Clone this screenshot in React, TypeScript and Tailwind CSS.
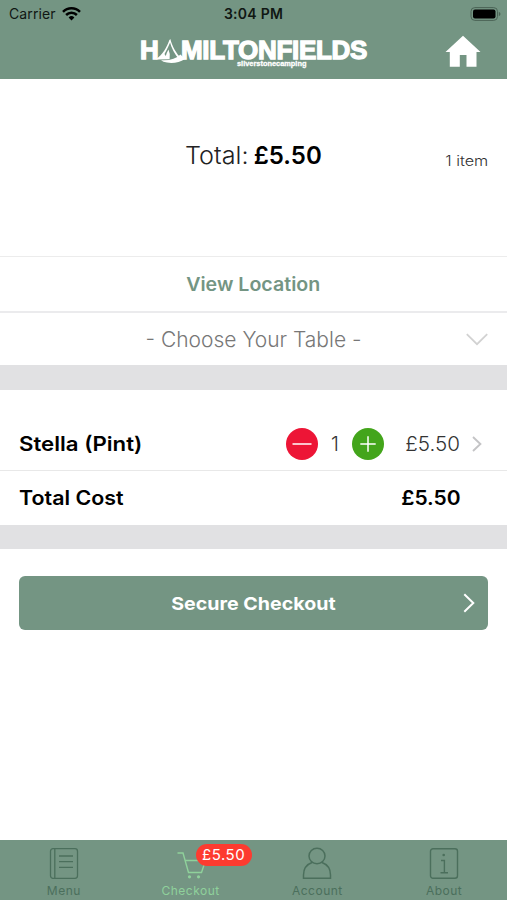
import React from 'react';

const ios = "font-['Inter',sans-serif]";

function StatusBar() {
  return (
    <div className="grid h-[27px] grid-cols-3 items-center text-[14px] text-[#101713]">
      <div className="flex items-center gap-[6px] pl-[9px]">
        <span className="tracking-[0.1px]">Carrier</span>
        <svg width="19" height="14" viewBox="0 0 19 14" fill="none" stroke="black" strokeWidth="2.5">
          <path d="M1 4.8a12 12 0 0 1 17 0" />
          <path d="M4.1 8a7.6 7.6 0 0 1 10.8 0" />
          <path d="M9.5 13.4 6.6 10.5a4.1 4.1 0 0 1 5.8 0Z" fill="black" stroke="none" />
        </svg>
      </div>
      <div className="text-center font-semibold whitespace-nowrap tracking-[0.25px]">3:04 PM</div>
      <div className="flex justify-end pr-[6px]">
        <svg width="31" height="14" viewBox="0 0 31 14">
          <rect x="1" y="0.6" width="26.5" height="12.8" rx="3.8" fill="none" stroke="#4b6356" />
          <rect x="3" y="2.6" width="22.5" height="8.8" rx="2" fill="black" />
          <path d="M28.8 4.8v4.4q1.7-.7 1.7-2.2t-1.7-2.2Z" fill="#4b6356" />
        </svg>
      </div>
    </div>
  );
}

function Logo() {
  return (
    <div className="relative flex h-[32px] w-[230px] items-start font-['Liberation_Sans',sans-serif] text-white">
      <span className="mt-[2px] w-[19px] text-[26px] leading-[20px] font-bold [-webkit-text-stroke:1.3px_white]">H</span>
      <svg className="-ml-[3px] shrink-0" width="30" height="26" viewBox="0 0 30 26" fill="white">
        <path d="M14.2 1 13.2 2.6C10.5 10 7 16.2 0 21.2L6.5 20.8C6 20 10.5 13 14.2 4.2Z" />
        <path d="M14.2 1C16.5 8.5 20 15.5 25.5 20.5L23.5 21.5C18.5 16.5 15.5 10 13.6 3Z" />
        <path d="M12.5 11.5Q10.5 15 9.8 18L8 15.5Q6 19 1 21.5L13.6 21.2Q14.6 16 12.5 11.5Z" />
        <path d="M5 22.2Q18 23 24.5 16.5L29 21Q21 26 11 24.6Q7 24 5 22.2Z" />
      </svg>
      <span className="mt-[2px] -ml-[5px] text-[26px] leading-[20px] font-bold tracking-[-0.3px] whitespace-nowrap [-webkit-text-stroke:1.3px_white]">MILTONFIELDS</span>
      <span className="absolute top-[22px] left-[97px] text-[7.4px] leading-[8px] font-bold whitespace-nowrap [-webkit-text-stroke:0.3px_white]">silverstonecamping</span>
    </div>
  );
}

function Tab({ label, active = false, children }: { label: string; active?: boolean; children: React.ReactNode }) {
  return (
    <div className={`flex flex-1 flex-col items-center pt-[7px] pl-px ${active ? 'text-[#8fd19b]' : 'text-[#4b6f5c]'}`}>
      <div className="relative h-[34px] w-[30px]">{children}</div>
      <span className="mt-[2px] text-[12px] leading-[15px] tracking-[0.5px]">{label}</span>
    </div>
  );
}

export default function App() {
  return (
    <div className={`flex h-[900px] w-[507px] flex-col overflow-hidden bg-white text-black ${ios}`}>
      <header className="h-[79px] shrink-0 bg-[#749583]">
        <StatusBar />
        <div className="flex items-start pl-[140px]">
          <div className="pt-[11px]"><Logo /></div>
          <svg className="mt-[8px] ml-[75px]" width="36" height="33" viewBox="0 0 36 33" fill="white">
            <path d="M18 .8 35.5 17H31.5V31.8H21.5V20H14.8V31.8H4.8V17H.5Z" />
          </svg>
        </div>
      </header>

      <section className="grid h-[177px] shrink-0 grid-cols-[1fr_auto_1fr] items-start px-[19px]">
        <span />
        <div className="flex pt-[61px] text-[24px] leading-[32px] font-light whitespace-nowrap">
          <span className="mr-[8px] origin-left scale-x-105 text-[#222]">Total:</span>
          <span className="origin-right font-semibold">£5.50</span>
        </div>
        <div className="origin-right scale-x-112 pt-[72px] text-right text-[14.5px] leading-[20px] font-light text-[#333]">1 item</div>
      </section>

      <div className="flex h-[55px] shrink-0 items-center justify-center border-t border-[#ececec] pt-[2px] text-[18.5px] font-semibold text-[#749583]">
        <span className="scale-x-106">View Location</span>
      </div>
      <div className="grid h-[54px] shrink-0 grid-cols-[1fr_auto_1fr] items-center border-t-2 border-[#ebebed] px-[19px] pt-px">
        <span />
        <span className="text-[21px] leading-[30px] font-light text-[#777]">- Choose Your Table -</span>
        <svg className="-mt-px justify-self-end" width="22" height="13" viewBox="0 0 22 13" fill="none" stroke="#d2d2d2" strokeWidth="1.8"><path d="m.8 1.2 10.2 10 10.2-10" /></svg>
      </div>
      <div className="h-[25px] shrink-0 bg-[#e1e1e3]" />

      <div className="flex h-[80px] shrink-0 items-center pt-[28px] pl-[19px]">
        <div className="flex w-[267px] text-[20px] font-semibold"><span className="origin-left scale-x-111">Stella (Pint)</span></div>
        <svg width="32" height="32" viewBox="0 0 32 32"><circle cx="16" cy="16" r="16" fill="#ed1536" /><path d="M6.5 16h19" stroke="white" strokeWidth="1.5" /></svg>
        <span className="w-[34px] text-center text-[20px] font-light text-[#333]">1</span>
        <svg width="32" height="32" viewBox="0 0 32 32"><circle cx="16" cy="16" r="16" fill="#43a51b" /><path d="M8.3 16h15.4M16 8.3v15.4" stroke="white" strokeWidth="1.5" /></svg>
        <span className="w-[76px] origin-right scale-x-103 text-right text-[20px] font-light text-[#333]">£5.50</span>
        <svg className="ml-[12px]" width="10" height="16" viewBox="0 0 10 16" fill="none" stroke="#c4c4c6" strokeWidth="1.9"><path d="m1 1 7.4 7L1 15" /></svg>
      </div>
      <div className="flex h-[55px] shrink-0 items-center justify-between border-t border-[#e8e8e8] pr-[46px] pl-[19px] text-[20px] font-semibold">
        <span className="origin-left scale-x-107">Total Cost</span><span className="origin-right scale-x-105">£5.50</span>
      </div>
      <div className="h-[24px] shrink-0 bg-[#e1e1e3]" />

      <main className="flex-1 px-[19px] pt-[27px]">
        <button className="grid h-[54px] w-full grid-cols-[1fr_auto_1fr] items-center rounded-[6px] bg-[#749583] pr-[13px] pl-[13px] text-white">
          <span />
          <span className="scale-x-109 text-[18px] font-bold">Secure Checkout</span>
          <svg className="justify-self-end" width="12" height="20" viewBox="0 0 12 20" fill="none" stroke="white" strokeWidth="2"><path d="m1.3 1.2 9 8.8-9 8.8" /></svg>
        </button>
      </main>

      <nav className="flex h-[60px] shrink-0 bg-[#749583]">
        <Tab label="Menu">
          <svg width="30" height="34" viewBox="0 0 30 34" fill="none" stroke="currentColor" strokeWidth="1.3">
            <rect x="1.5" y="1.7" width="27" height="29.6" rx="2.5" /><path d="M5.8 2v29M10 9h14M10 14.7h14M10 20.3h14" />
          </svg>
        </Tab>
        <Tab label="Checkout" active>
          <svg width="30" height="34" viewBox="0 0 30 34" fill="none" stroke="currentColor" strokeWidth="1.4">
            <path d="M1.5 6H7l5.5 19.5h13L29.5 13.5H9.5" /><circle cx="13.5" cy="29.8" r="1.6" fill="currentColor" stroke="none" /><circle cx="22.5" cy="29.8" r="1.6" fill="currentColor" stroke="none" />
          </svg>
          <span className="absolute top-[-3px] left-[20px] flex h-[22px] w-[56px] items-center justify-center rounded-full bg-[#fd3b30] text-[15px] tracking-[0.5px] text-white">£5.50</span>
        </Tab>
        <Tab label="Account">
          <svg width="30" height="34" viewBox="0 0 30 34" fill="none" stroke="currentColor" strokeWidth="1.5">
            <ellipse cx="15" cy="9" rx="8" ry="7.8" /><path d="M10.5 15.3Q1.5 18.5 1.5 28v3.2h27V28q0-9.5-9-12.7" />
          </svg>
        </Tab>
        <Tab label="About">
          <svg width="30" height="34" viewBox="0 0 30 34" fill="none" stroke="currentColor" strokeWidth="1.4">
            <rect x="1.5" y="1.7" width="27" height="29.6" rx="2.5" /><path d="M12 13.5h3.4v12.3M11.5 25.8h7.5" /><circle cx="14.7" cy="8" r="1.3" fill="currentColor" stroke="none" />
          </svg>
        </Tab>
      </nav>
    </div>
  );
}
